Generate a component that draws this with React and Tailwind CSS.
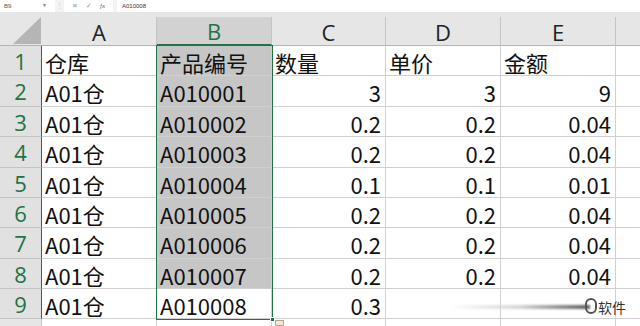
import React from 'react';

const cols = [
  { key: 'A', w: 'w-[115px]' },
  { key: 'B', w: 'w-[115px]' },
  { key: 'C', w: 'w-[114px]' },
  { key: 'D', w: 'w-[115px]' },
  { key: 'E', w: 'w-[115px]' },
];

const rows = [
  { h: 'h-[30px]', cells: ['仓库', '产品编号', '数量', '单价', '金额'] },
  { h: 'h-[31px]', cells: ['A01仓', 'A010001', '3', '3', '9'] },
  { h: 'h-[30px]', cells: ['A01仓', 'A010002', '0.2', '0.2', '0.04'] },
  { h: 'h-[31px]', cells: ['A01仓', 'A010003', '0.2', '0.2', '0.04'] },
  { h: 'h-[30px]', cells: ['A01仓', 'A010004', '0.1', '0.1', '0.01'] },
  { h: 'h-[30px]', cells: ['A01仓', 'A010005', '0.2', '0.2', '0.04'] },
  { h: 'h-[31px]', cells: ['A01仓', 'A010006', '0.2', '0.2', '0.04'] },
  { h: 'h-[30px]', cells: ['A01仓', 'A010007', '0.2', '0.2', '0.04'] },
  // D9 / E9 sit under the watermark smear
  { h: 'h-[30px]', cells: ['A01仓', 'A010008', '0.3', '', ''] },
];

const font = "font-['Noto_Sans_CJK_SC','Noto_Sans',sans-serif]";

const App = () => {
  return (
    <div className={`w-[640px] h-[326px] overflow-hidden bg-white relative ${font}`}>
      {/* formula bar */}
      <div className="h-[12px] flex items-stretch bg-[#f3f3f3] font-['Liberation_Sans',sans-serif]">
        <div className="w-[55px] bg-white flex items-center justify-between pl-[4px] pr-[8px] text-[6px] text-[#555]">
          <span>B9</span>
          <span className="text-[5px] text-[#777]">▼</span>
        </div>
        <div className="w-[9px] flex items-center justify-center text-[7px] text-[#bbb]">⋮</div>
        <div className="w-[49px] bg-white flex items-center gap-[8px] pl-[8px] text-[7px] text-[#999]">
          <span>✕</span>
          <span>✓</span>
          <span className="italic font-['Liberation_Serif',serif] text-[#666]">fx</span>
        </div>
        <div className="w-[4px]" />
        <div className="flex-1 bg-white flex items-center pl-[5px] text-[6px] text-[#333]">A010008</div>
      </div>

      {/* column headers */}
      <div className="h-[34px] flex bg-[#e6e6e6] border-b border-[#b4b4b4]">
        <div className="w-[42px] h-full flex items-end justify-end pr-[1px] pb-[1px]">
          <svg width="28" height="27" viewBox="0 0 28 27">
            <polygon points="28,0 28,27 0,27" fill="#b5b5b5" />
          </svg>
        </div>
        {cols.map((c) => (
          <div
            key={c.key}
            className={`${c.w} mt-[5px] h-[29px] flex items-center justify-center text-[22px] leading-none font-['Open_Sans',sans-serif] border-r border-[#c4c4c4] ${
              c.key === 'B' ? 'bg-[#d2d2d2] text-[#217346] border-b-2 border-b-[#217346]' : 'text-[#222]'
            }`}
          >
            {c.key}
          </div>
        ))}
        <div className="flex-1" />
      </div>

      {/* body */}
      <div className="flex flex-col">
        {rows.map((r, i) => (
          <div key={i} className={`${r.h} flex`}>
            <div className="w-[42px] shrink-0 bg-[#e1e1e1] border-r border-r-[#217346] border-b border-b-[#c4c4c4] flex items-center justify-center text-[22px] font-['Open_Sans',sans-serif] text-[#217346] leading-none">
              {i + 1}
            </div>
            {cols.map((c, j) => {
              const numeric = i > 0 && j >= 2;
              const selected = j === 1 && i < 8;
              return (
                <div
                  key={c.key}
                  className={`${c.w} shrink-0 border-r border-b border-[#d0d0d0] flex items-center pt-[2px] text-[22px] leading-none text-[#111] ${
                    numeric ? 'justify-end pr-[4px]' : 'pl-[3px]'
                  } ${selected ? 'bg-[#c6c6c6]' : ''}`}
                >
                  {r.cells[j]}
                </div>
              );
            })}
            <div className="flex-1 border-b border-[#d0d0d0]" />
          </div>
        ))}
        <div className="h-[8px] flex">
          <div className="w-[42px] bg-[#e6e6e6] border-r border-[#c4c4c4]" />
          {cols.map((c) => (
            <div key={c.key} className={`${c.w} border-r border-[#d0d0d0]`} />
          ))}
        </div>
      </div>

      {/* selection outline B1:B9 */}
      <div className="absolute left-[156px] top-[45px] w-[117px] h-[275px] border border-[#217346] pointer-events-none" />
      <div className="absolute left-[270px] top-[317px] w-[5px] h-[5px] bg-[#217346] border border-white" />
      <div className="absolute left-[275px] top-[320px] w-[9px] h-[6px] bg-[#f2e6d8] border border-[#b9a58d]" />

      {/* watermark */}
      <div className="absolute left-[450px] top-[305px] w-[140px] h-[4px] bg-gradient-to-r from-white/0 via-[#d6d6d6] to-[#5f5f5f] blur-[1px]" />
      <div className="absolute left-[585px] top-[298px] w-[12px] h-[16px] rounded-full border-2 border-[#555] blur-[0.5px]" />
      <div className="absolute left-[598px] top-[300px] text-[14px] leading-none text-[#333]">软件</div>
    </div>
  );
};

export default App;
